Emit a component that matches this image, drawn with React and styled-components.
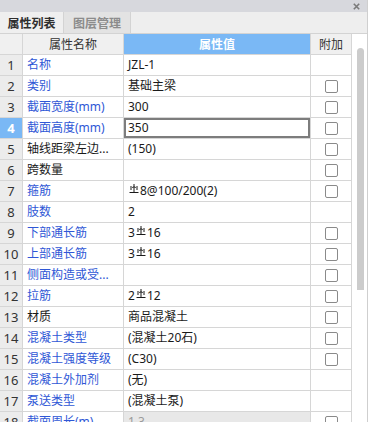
import React from "react";
import styled, { createGlobalStyle } from "styled-components";

const Global = createGlobalStyle`
  html, body { margin: 0; padding: 0; background: #ffffff; }
  body { font-family: "Noto Sans", "Noto Sans CJK SC", sans-serif; }
  #root { width: 368px; height: 422px; overflow: hidden; }
`;

const Panel = styled.div`
  width: 368px;
  height: 422px;
  display: flex;
  flex-direction: column;
  overflow: hidden;
  background: #ffffff;
  box-sizing: border-box;
  border-right: 1px solid #cfcfcf;
`;

const TitleBar = styled.div`
  height: 12px;
  flex: none;
  background: #d7d8dd;
  display: flex;
  justify-content: flex-end;
  align-items: center;
  padding-right: 7px;
  box-sizing: border-box;
`;

const CloseBtn = styled.svg`
  width: 7px;
  height: 7px;
  display: block;
`;

const TabBar = styled.div`
  height: 22px;
  flex: none;
  display: flex;
  background: #eeeeee;
  border-bottom: 1px solid #d3d3d3;
  box-sizing: border-box;
`;

const Tab = styled.div`
  width: ${(p) => p.$w}px;
  height: 100%;
  display: flex;
  align-items: center;
  justify-content: center;
  font-family: "Noto Sans CJK SC", sans-serif;
  font-size: 12px;
  font-weight: 700;
  color: ${(p) => (p.$active ? "#2e2e2e" : "#8c8c8c")};
  background: ${(p) => (p.$active ? "#efefef" : "#e3e3e3")};
  border-right: 1px solid #d3d3d3;
  box-sizing: border-box;
`;

const Body = styled.div`
  flex: 1;
  display: flex;
  min-height: 0;
`;

const Grid = styled.div`
  display: grid;
  grid-template-columns: 23px 101px 187px 41px;
  grid-auto-rows: 21px;
  align-content: start;
  flex: none;
`;

const Cell = styled.div`
  box-sizing: border-box;
  border-right: 1px solid #d6d6d6;
  border-bottom: 1px solid #d6d6d6;
  display: flex;
  align-items: center;
  font-size: 12px;
  line-height: 14px;
  white-space: nowrap;
  overflow: hidden;
`;

const HeadCell = styled(Cell)`
  justify-content: center;
  font-family: "Noto Sans CJK SC", sans-serif;
  background: ${(p) => (p.$accent ? "#7ab8f5" : "#f0f0f0")};
  color: ${(p) => (p.$accent ? "#ffffff" : "#333333")};
  font-weight: ${(p) => (p.$accent ? 700 : 400)};
`;

const IndexCell = styled(Cell)`
  justify-content: center;
  background: ${(p) => (p.$selected ? "#7ab8f5" : "#ececec")};
  color: ${(p) => (p.$selected ? "#ffffff" : "#333333")};
  font-weight: ${(p) => (p.$selected ? 700 : 400)};
  font-size: 13px;
`;

const NameCell = styled(Cell)`
  padding-left: 4px;
  color: ${(p) => (p.$blue ? "#2f57d6" : "#1a1a1a")};
`;

const ValueCell = styled(Cell)`
  padding-left: 4px;
  color: ${(p) => (p.$disabled ? "#9a9a9a" : "#1a1a1a")};
  background: ${(p) => (p.$disabled ? "#e8e8e8" : "#ffffff")};
  box-shadow: ${(p) => (p.$selected ? "inset 0 0 0 2px #7d7d7d" : "none")};
`;

const ExtraCell = styled(Cell)`
  justify-content: center;
`;

const Check = styled.div`
  width: 13px;
  height: 13px;
  box-sizing: border-box;
  border: 1px solid #8a8a8a;
  border-radius: 2px;
  background: #ffffff;
`;

const Track = styled.div`
  flex: 1;
  display: flex;
  justify-content: center;
  padding-top: 14px;
  padding-left: 1px;
`;

const Thumb = styled.div`
  width: 7px;
  height: 242px;
  border-radius: 4px 4px 0 0;
  background: #cccccc;
`;

const Rebar = styled.svg`
  width: 10px;
  height: 9px;
  margin: -6px 1px 0 1px;
  flex: none;
`;

const RebarIcon = () => (
  <Rebar viewBox="0 0 10 9">
    <g stroke="#1a1a1a" strokeWidth="1" fill="none">
      <line x1="5" y1="0" x2="5" y2="8" />
      <line x1="2" y1="2" x2="2" y2="6" />
      <line x1="8" y1="2" x2="8" y2="6" />
      <path d="M3.2 3.5 Q5 2.2 6.8 3.5" />
      <line x1="0.5" y1="8.5" x2="9.5" y2="8.5" />
    </g>
  </Rebar>
);

const renderValue = (v) => {
  if (typeof v === "string") return v;
  return (
    <>
      {v.pre}
      <RebarIcon />
      {v.post}
    </>
  );
};

const rows = [
  { name: "名称", blue: true, value: "JZL-1", cb: false },
  { name: "类别", blue: true, value: "基础主梁", cb: true },
  { name: "截面宽度(mm)", blue: true, value: "300", cb: true },
  { name: "截面高度(mm)", blue: true, value: "350", cb: true, selected: true },
  { name: "轴线距梁左边...", blue: false, value: "(150)", cb: true },
  { name: "跨数量", blue: false, value: "", cb: true },
  { name: "箍筋", blue: true, value: { pre: " ", post: "8@100/200(2)" }, cb: true },
  { name: "肢数", blue: true, value: "2", cb: false },
  { name: "下部通长筋", blue: true, value: { pre: "3", post: "16" }, cb: true },
  { name: "上部通长筋", blue: true, value: { pre: "3", post: "16" }, cb: true },
  { name: "侧面构造或受...", blue: true, value: "", cb: true },
  { name: "拉筋", blue: true, value: { pre: "2", post: "12" }, cb: true },
  { name: "材质", blue: false, value: "商品混凝土", cb: true },
  { name: "混凝土类型", blue: true, value: "(混凝土20石)", cb: true },
  { name: "混凝土强度等级", blue: true, value: "(C30)", cb: true },
  { name: "混凝土外加剂", blue: true, value: "(无)", cb: false },
  { name: "泵送类型", blue: true, value: "(混凝土泵)", cb: false },
  { name: "截面周长(m)", blue: true, value: "1.3", cb: true, disabled: true },
];

export default function App() {
  return (
    <>
      <Global />
      <Panel>
        <TitleBar>
          <CloseBtn viewBox="0 0 7 7">
            <path d="M0.8 0.8 L6.2 6.2 M6.2 0.8 L0.8 6.2" stroke="#7a7a7a" strokeWidth="1.6" />
          </CloseBtn>
        </TitleBar>
        <TabBar>
          <Tab $active $w={64}>属性列表</Tab>
          <Tab $w={67}>图层管理</Tab>
        </TabBar>
        <Body>
          <Grid>
            <HeadCell />
            <HeadCell>属性名称</HeadCell>
            <HeadCell $accent>属性值</HeadCell>
            <HeadCell>附加</HeadCell>
            {rows.map((r, i) => (
              <React.Fragment key={i}>
                <IndexCell $selected={r.selected}>{i + 1}</IndexCell>
                <NameCell $blue={r.blue}>{r.name}</NameCell>
                <ValueCell $selected={r.selected} $disabled={r.disabled}>
                  {renderValue(r.value)}
                </ValueCell>
                <ExtraCell>{r.cb && <Check />}</ExtraCell>
              </React.Fragment>
            ))}
          </Grid>
          <Track>
            <Thumb />
          </Track>
        </Body>
      </Panel>
    </>
  );
}
